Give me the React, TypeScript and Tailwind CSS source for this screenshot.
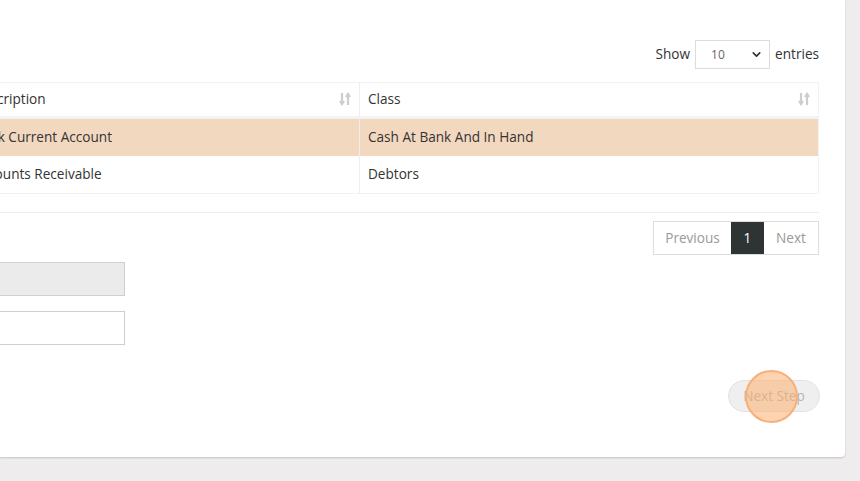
import { ChevronDown } from "lucide-react";

const rows = [
  { description: "Bank Current Account", cls: "Cash At Bank And In Hand", active: true },
  { description: "Accounts Receivable", cls: "Debtors", active: false },
];

function SortIcon() {
  return (
    <svg width="12" height="14" viewBox="0 0 12 14" className="text-[#cdcdcd]">
      <path d="M3 1v10M1 9l2 3 2-3" stroke="currentColor" strokeWidth="2.2" fill="none" />
      <path d="M9 13V3M7 5l2-3 2 3" stroke="currentColor" strokeWidth="2.2" fill="none" />
    </svg>
  );
}

export default function App() {
  return (
    <div
      className="w-[860px] h-[481px] overflow-hidden bg-[#eeeced] text-[13.6px] text-[#333]"
      style={{ fontFamily: '"Open Sans", "Noto Sans", sans-serif' }}
    >
      <div className="relative w-[845px] h-[457px] bg-white rounded-br-[4px] shadow-[0_1px_2px_rgba(0,0,0,0.18)] overflow-hidden">
        <div className="ml-[-36px] w-[855px] pt-[40px]">
          {/* length selector */}
          <div className="flex items-center justify-end h-[29px] gap-[5px]">
            <span>Show</span>
            <div className="flex items-center justify-between w-[75px] h-[29px] border border-[#dcdcdc] bg-white pl-[15px] pr-[6px] text-[12px] text-[#666]">
              <span>10</span>
              <ChevronDown size={13} strokeWidth={3} className="text-[#333]" />
            </div>
            <span>entries</span>
          </div>

          {/* table */}
          <div className="mt-[13px] border-b border-[#eeeeee] h-[131px]">
            <table className="w-full border-collapse border border-[#f2f2f2]">
              <thead>
                <tr className="h-[35px] border-b-[3px] border-[#f3f3f3]">
                  <th className="w-[395px] text-left font-normal px-2 border-r border-[#eeeeee]">
                    <div className="flex items-center justify-between">
                      <span>Description</span>
                      <SortIcon />
                    </div>
                  </th>
                  <th className="text-left font-normal px-2">
                    <div className="flex items-center justify-between">
                      <span>Class</span>
                      <SortIcon />
                    </div>
                  </th>
                </tr>
              </thead>
              <tbody>
                {rows.map((r) => (
                  <tr key={r.description} className={`h-[38px] ${r.active ? "bg-[#f3d8c0]" : "bg-white"}`}>
                    <td className="px-2 border-r border-[#eeeeee]">{r.description}</td>
                    <td className="px-2">{r.cls}</td>
                  </tr>
                ))}
              </tbody>
            </table>
          </div>

          {/* pagination */}
          <div className="mt-[8px] flex justify-end">
            <div className="flex h-[34px] border border-[#dddddd]">
              <span className="flex items-center justify-center w-[77px] text-[#999]">Previous</span>
              <span className="flex items-center justify-center w-[33px] bg-[#2e3434] text-white">1</span>
              <span className="flex items-center justify-center w-[54px] text-[#999]">Next</span>
            </div>
          </div>

          {/* inputs */}
          <div className="mt-[7px] w-[161px] h-[34px] border border-[#cfcfcf] bg-[#ebebeb]" />
          <div className="mt-[15px] w-[161px] h-[34px] border border-[#cfcfcf] bg-white" />

          {/* next step */}
          <div className="mt-[35px] flex justify-end mr-[-1px]">
            <div className="relative">
              <button className="h-[32px] w-[92px] rounded-full bg-[#efefef] border border-[#e2e2e2] text-[#b5b5b5] text-[13.6px]">
                Next Step
              </button>
              <div className="absolute left-[17px] top-[-10px] w-[53px] h-[53px] rounded-full bg-[rgba(251,176,110,0.55)] border-2 border-[#f7b07a]" />
            </div>
          </div>
        </div>
      </div>
    </div>
  );
}
